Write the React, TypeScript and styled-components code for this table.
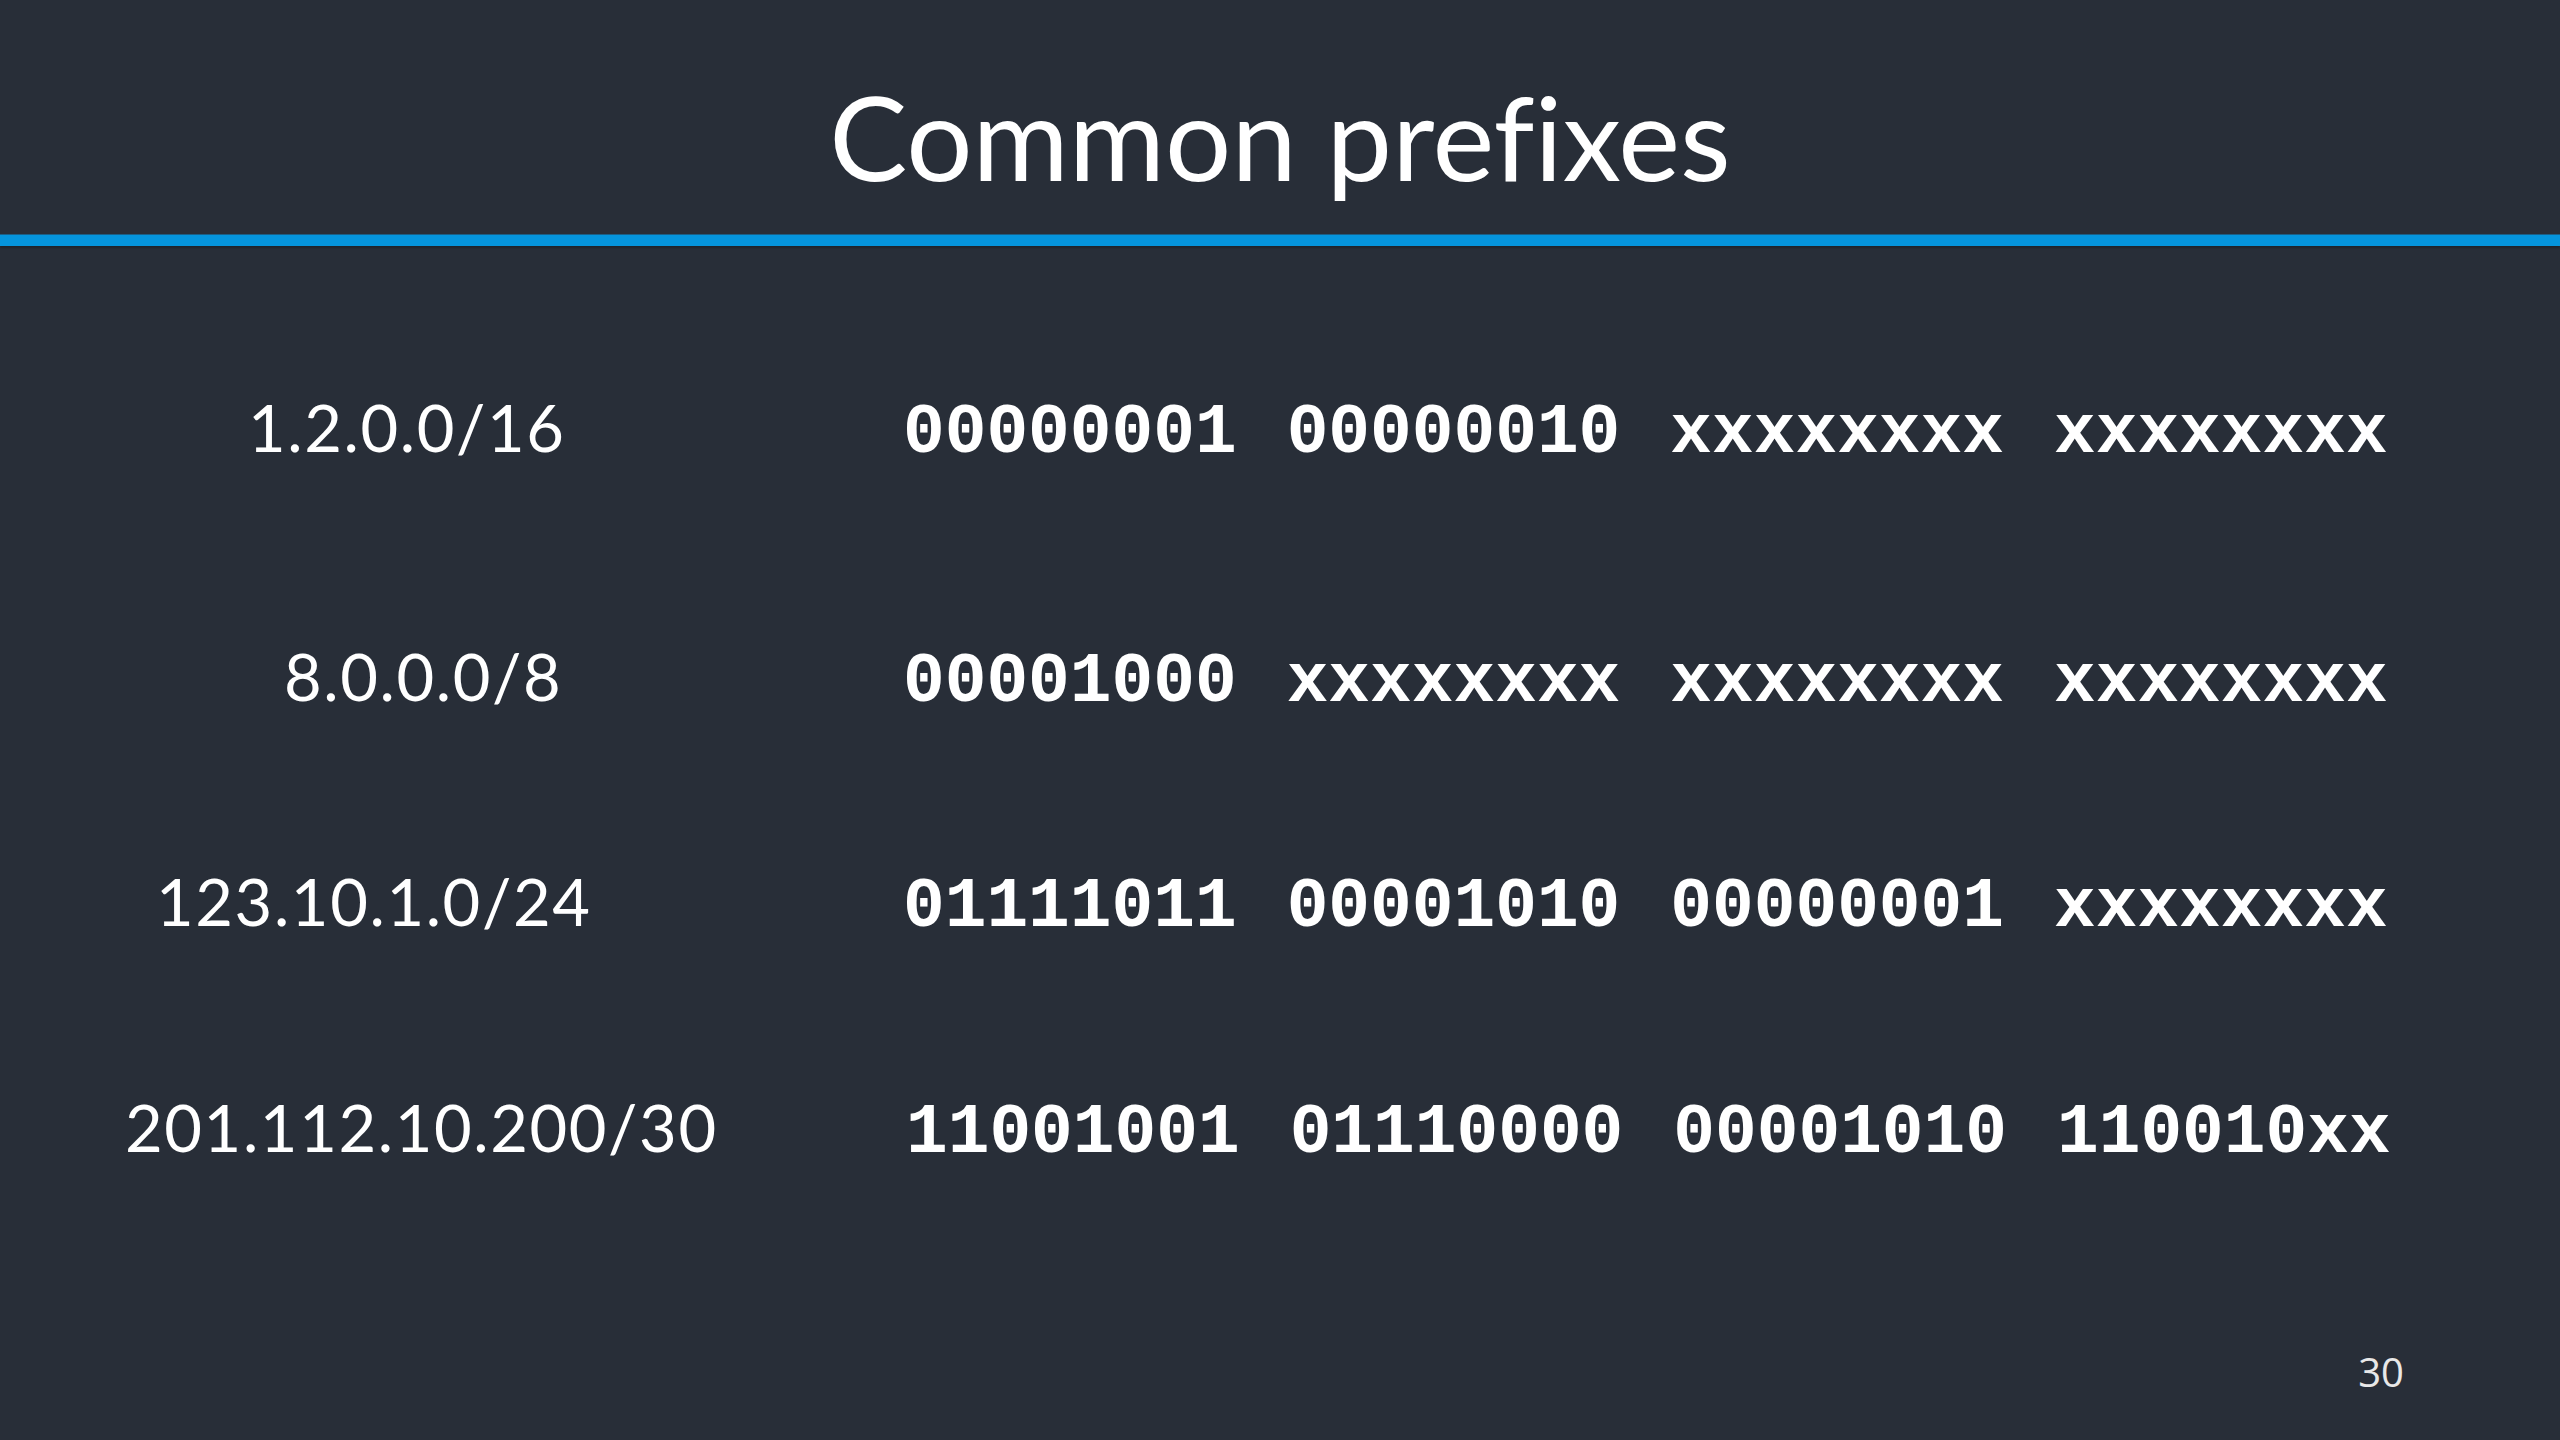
import React from "react";
import styled, { createGlobalStyle } from "styled-components";

const GlobalStyle = createGlobalStyle`
  html, body {
    margin: 0;
    padding: 0;
    background: #282e38;
  }
  * { box-sizing: border-box; }
`;

const Slide = styled.div`
  width: 2560px;
  height: 1440px;
  background: #282e38;
  display: flex;
  flex-direction: column;
  overflow: hidden;
  color: #ffffff;
`;

const Header = styled.header`
  display: flex;
  flex-direction: column;
  align-items: center;
  padding-top: 78px;
`;

const Title = styled.h1`
  margin: 0;
  font-family: Lato, "Liberation Sans", sans-serif;
  font-weight: 400;
  font-size: 117px;
  line-height: 1;
  color: #ffffff;
  font-variant-ligatures: none;
  font-feature-settings: "liga" 0, "clig" 0;
`;

const Rule = styled.div`
  align-self: stretch;
  height: 11px;
  margin-top: 40px;
  background: #0594dc;
  box-shadow: 0 -1px 0 #1b5f86, 0 2px 2px rgba(0, 0, 0, 0.25);
`;

const Body = styled.main`
  display: flex;
  flex-direction: column;
  padding-top: 149px;
`;

const Row = styled.div<{ $gap: number }>`
  display: grid;
  grid-template-columns: 903px auto;
  align-items: baseline;
  margin-top: ${(p) => p.$gap}px;
  line-height: 1;
`;

const Label = styled.div<{ $indent: number }>`
  padding-left: ${(p) => p.$indent}px;
  font-family: Lato, "Liberation Sans", sans-serif;
  font-size: 65px;
  font-weight: 400;
  letter-spacing: 1.6px;
  color: #ffffff;
  white-space: nowrap;
`;

const Bits = styled.div<{ $shift: number }>`
  display: flex;
  gap: 50px;
  margin-left: ${(p) => p.$shift}px;
  font-family: "Liberation Mono", "Courier New", monospace;
  font-weight: 700;
  font-size: 69.5px;
  color: #ffffff;
  white-space: pre;
`;

const Octet = styled.span`
  display: inline-block;
`;

const Footer = styled.footer`
  margin-top: auto;
  display: flex;
  justify-content: flex-end;
  padding: 0 156px 48px 0;
`;

const PageNumber = styled.span`
  font-family: "Open Sans", "Liberation Sans", sans-serif;
  font-size: 40px;
  line-height: 1;
  color: #e8e8e8;
`;

type Prefix = {
  label: string;
  indent: number;
  octets: string[];
  gap: number;
  shift: number;
};

const prefixes: Prefix[] = [
  {
    label: "1.2.0.0/16",
    indent: 248,
    octets: ["00000001", "00000010", "xxxxxxxx", "xxxxxxxx"],
    gap: 0,
    shift: 0,
  },
  {
    label: "8.0.0.0/8",
    indent: 284,
    octets: ["00001000", "xxxxxxxx", "xxxxxxxx", "xxxxxxxx"],
    gap: 175,
    shift: 0,
  },
  {
    label: "123.10.1.0/24",
    indent: 156,
    octets: ["01111011", "00001010", "00000001", "xxxxxxxx"],
    gap: 152,
    shift: 0,
  },
  {
    label: "201.112.10.200/30",
    indent: 125,
    octets: ["11001001", "01110000", "00001010", "110010xx"],
    gap: 152,
    shift: 3,
  },
];

export default function App() {
  return (
    <>
      <GlobalStyle />
      <Slide>
        <Header>
          <Title>Common prefixes</Title>
          <Rule />
        </Header>
        <Body>
          {prefixes.map((p) => (
            <Row key={p.label} $gap={p.gap}>
              <Label $indent={p.indent}>{p.label}</Label>
              <Bits $shift={p.shift}>
                {p.octets.map((o, i) => (
                  <Octet key={i}>{o}</Octet>
                ))}
              </Bits>
            </Row>
          ))}
        </Body>
        <Footer>
          <PageNumber>30</PageNumber>
        </Footer>
      </Slide>
    </>
  );
}
